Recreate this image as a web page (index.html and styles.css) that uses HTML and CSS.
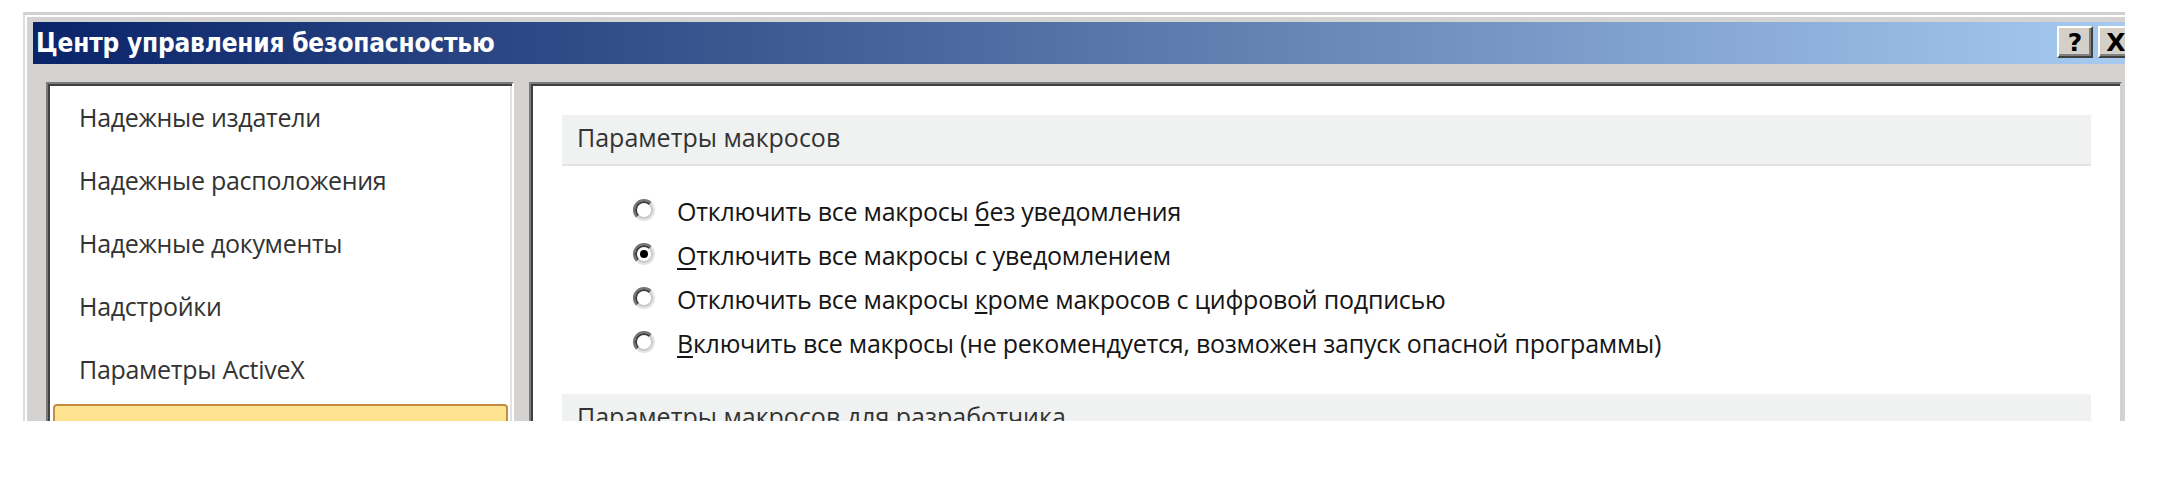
FILE: index.html
```html
<!DOCTYPE html>
<html lang="ru">
<head>
<meta charset="utf-8">
<title>Центр управления безопасностью</title>
<link rel="stylesheet" href="styles.css">
</head>
<body>
<div class="dialog">
  <div class="titlebar">
    <span class="title">Центр управления безопасностью</span>
    <div class="caption-buttons">
      <span class="cbtn">?</span>
      <span class="cbtn">X</span>
    </div>
  </div>
  <div class="body">
    <div class="nav">
      <div class="nav-item">Надежные издатели</div>
      <div class="nav-item">Надежные расположения</div>
      <div class="nav-item">Надежные документы</div>
      <div class="nav-item">Надстройки</div>
      <div class="nav-item">Параметры ActiveX</div>
      <div class="nav-item selected">Параметры макросов</div>
    </div>
    <div class="content">
      <div class="section-head">Параметры макросов</div>
      <div class="options">
        <div class="option">
          <svg class="radio" viewBox="0 0 24 24" width="24" height="24"><circle cx="12" cy="12" r="10" fill="#fff"/><path d="M4.9 19.1 A10 10 0 0 1 19.1 4.9" fill="none" stroke="#747474" stroke-width="2"/><path d="M6.3 17.7 A8 8 0 0 1 17.7 6.3" fill="none" stroke="#3c3c3c" stroke-width="2"/><path d="M19.1 4.9 A10 10 0 0 1 4.9 19.1" fill="none" stroke="#e4e4e4" stroke-width="2"/><path d="M17.7 6.3 A8 8 0 0 1 6.3 17.7" fill="none" stroke="#c9c9c9" stroke-width="2"/></svg>
          <span class="label">Отключить все макросы <u>б</u>ез уведомления</span>
        </div>
        <div class="option">
          <svg class="radio" viewBox="0 0 24 24" width="24" height="24"><circle cx="12" cy="12" r="10" fill="#fff"/><path d="M4.9 19.1 A10 10 0 0 1 19.1 4.9" fill="none" stroke="#747474" stroke-width="2"/><path d="M6.3 17.7 A8 8 0 0 1 17.7 6.3" fill="none" stroke="#3c3c3c" stroke-width="2"/><path d="M19.1 4.9 A10 10 0 0 1 4.9 19.1" fill="none" stroke="#e4e4e4" stroke-width="2"/><path d="M17.7 6.3 A8 8 0 0 1 6.3 17.7" fill="none" stroke="#c9c9c9" stroke-width="2"/><circle cx="12" cy="12" r="4" fill="#000"/></svg>
          <span class="label"><u>О</u>тключить все макросы с уведомлением</span>
        </div>
        <div class="option">
          <svg class="radio" viewBox="0 0 24 24" width="24" height="24"><circle cx="12" cy="12" r="10" fill="#fff"/><path d="M4.9 19.1 A10 10 0 0 1 19.1 4.9" fill="none" stroke="#747474" stroke-width="2"/><path d="M6.3 17.7 A8 8 0 0 1 17.7 6.3" fill="none" stroke="#3c3c3c" stroke-width="2"/><path d="M19.1 4.9 A10 10 0 0 1 4.9 19.1" fill="none" stroke="#e4e4e4" stroke-width="2"/><path d="M17.7 6.3 A8 8 0 0 1 6.3 17.7" fill="none" stroke="#c9c9c9" stroke-width="2"/></svg>
          <span class="label">Отключить все макросы <u>к</u>роме макросов с цифровой подписью</span>
        </div>
        <div class="option">
          <svg class="radio" viewBox="0 0 24 24" width="24" height="24"><circle cx="12" cy="12" r="10" fill="#fff"/><path d="M4.9 19.1 A10 10 0 0 1 19.1 4.9" fill="none" stroke="#747474" stroke-width="2"/><path d="M6.3 17.7 A8 8 0 0 1 17.7 6.3" fill="none" stroke="#3c3c3c" stroke-width="2"/><path d="M19.1 4.9 A10 10 0 0 1 4.9 19.1" fill="none" stroke="#e4e4e4" stroke-width="2"/><path d="M17.7 6.3 A8 8 0 0 1 6.3 17.7" fill="none" stroke="#c9c9c9" stroke-width="2"/></svg>
          <span class="label"><u>В</u>ключить все макросы (не рекомендуется, возможен запуск опасной программы)</span>
        </div>
      </div>
      <div class="section-head">Параметры макросов для разработчика</div>
    </div>
  </div>
</div>
</body>
</html>
```

FILE: styles.css
```css
html, body {
  margin: 0;
  padding: 0;
  background: #ffffff;
}

.dialog {
  box-sizing: border-box;
  margin: 12px 0 0 23px;
  width: 2102px;
  height: 409px;
  overflow: hidden;
  background: #d4d3d1;
  border-top: 3px solid #d0d0d0;
  border-left: 2px solid #dcdcdc;
  box-shadow: inset 2px 2px 0 #ffffff;
  padding: 7px 0 0 8px;
}

.titlebar {
  height: 42px;
  display: flex;
  justify-content: space-between;
  align-items: center;
  background: linear-gradient(to right, #0a246a 0%, #3d5a92 35%, #a6caf0 100%);
  padding-left: 3px;
  overflow: hidden;
}

.title {
  font-family: "DejaVu Sans Condensed", "DejaVu Sans", sans-serif;
  font-stretch: condensed;
  font-weight: bold;
  font-size: 26px;
  color: #ffffff;
  white-space: nowrap;
  letter-spacing: -0.2px;
}

.caption-buttons {
  display: flex;
  gap: 5px;
  align-self: flex-start;
  margin-top: 4px;
  margin-right: -9px;
}

.cbtn {
  box-sizing: border-box;
  width: 36px;
  height: 32px;
  display: flex;
  align-items: center;
  justify-content: center;
  background: #d4d0c8;
  border-top: 2px solid #ffffff;
  border-left: 2px solid #ffffff;
  border-right: 2px solid #404040;
  border-bottom: 2px solid #404040;
  box-shadow: inset -2px -2px 0 #808080;
  font-family: "DejaVu Sans", sans-serif;
  font-weight: bold;
  font-size: 25px;
  line-height: 1;
  color: #000000;
}

.body {
  display: flex;
  gap: 15px;
  padding: 18px 0 0 13px;
}

.nav {
  box-sizing: border-box;
  width: 468px;
  height: 360px;
  flex: none;
  background: #ffffff;
  border-top: 2px solid #7a7a7a;
  border-left: 2px solid #7a7a7a;
  border-right: 2px solid #ffffff;
  box-shadow: inset 2px 2px 0 #404040, inset -2px 0 0 #e2e2e2;
  padding-top: 2px;
  font-family: "Open Sans", "Noto Sans", sans-serif;
  font-size: 25px;
  color: #333333;
}

.nav-item {
  height: 63px;
  line-height: 63px;
  padding-left: 31px;
  white-space: nowrap;
  letter-spacing: -0.3px;
}

.nav-item.selected {
  box-sizing: border-box;
  margin: 3px 4px 0 5px;
  padding-left: 26px;
  border: 2px solid #c48c42;
  border-radius: 4px;
  background: linear-gradient(#fde593, #fbd874);
}

.content {
  box-sizing: border-box;
  width: 1593px;
  height: 360px;
  flex: none;
  background: #ffffff;
  border-top: 2px solid #7a7a7a;
  border-left: 2px solid #7a7a7a;
  border-right: 2px solid #d0d0d0;
  box-shadow: inset 2px 2px 0 #404040;
  padding: 31px 29px 0 31px;
  font-family: "Open Sans", "Noto Sans", sans-serif;
  font-size: 25px;
}

.section-head {
  background: #f0f2f1;
  border-bottom: 2px solid #e3e5e4;
  padding: 5px 15px 10px;
  line-height: 34px;
  color: #333333;
  white-space: nowrap;
  letter-spacing: 0;
}

.options {
  padding: 23px 0 29px 0;
}

.option {
  display: flex;
  align-items: center;
  height: 44px;
  padding-left: 70px;
  gap: 21px;
  color: #151515;
  white-space: nowrap;
}

.radio {
  flex: none;
  margin-bottom: 3px;
}

.label {
  line-height: 44px;
  letter-spacing: -0.25px;
}

.label u {
  text-decoration-thickness: 2px;
  text-underline-offset: 3px;
}
```
